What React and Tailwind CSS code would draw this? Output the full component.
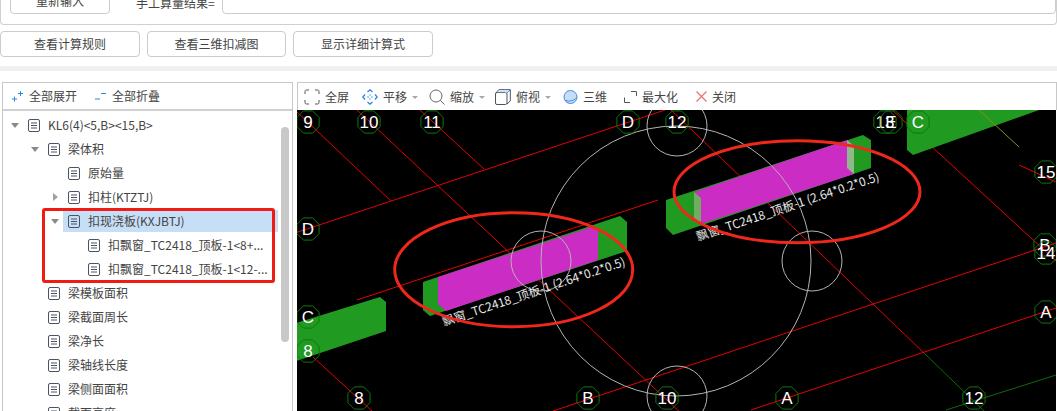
import React from 'react';

const DocIcon = () => (
  <svg width="12" height="13" viewBox="0 0 12 13" fill="none" stroke="#4b5363" strokeWidth="1" className="shrink-0">
    <rect x="0.5" y="0.5" width="11" height="12" rx="1.5" />
    <path d="M3 4h6M3 6.5h6M3 9h6" />
  </svg>
);

const treeRows = [
  { level: 0, arrow: 'down', text: 'KL6(4)<5,B><15,B>' },
  { level: 1, arrow: 'down', text: '梁体积' },
  { level: 2, text: '原始量' },
  { level: 2, arrow: 'right', text: '扣柱(KTZTJ)' },
  { level: 2, arrow: 'down', text: '扣现浇板(KXJBTJ)', active: true },
  { level: 3, text: '扣飘窗_TC2418_顶板-1<8+...' },
  { level: 3, text: '扣飘窗_TC2418_顶板-1<12-...' },
  { level: 1, text: '梁模板面积' },
  { level: 1, text: '梁截面周长' },
  { level: 1, text: '梁净长' },
  { level: 1, text: '梁轴线长度' },
  { level: 1, text: '梁侧面面积' },
  { level: 1, text: '截面高度' },
];

const indent = ['pl-[4px]', 'pl-[24px]', 'pl-[44px]', 'pl-[64px]'];

const TreeRow = ({ level, arrow, text, active }) => (
  <div className={`flex items-center h-6 shrink-0 ${indent[level]}`}>
    <div className="w-4 flex justify-center shrink-0">
      {arrow === 'down' && <div className="w-0 h-0 border-x-[4px] border-x-transparent border-t-[5px] border-t-[#8a8a8a]" />}
      {arrow === 'right' && <div className="w-0 h-0 border-y-[4px] border-y-transparent border-l-[5px] border-l-[#a0a0a0]" />}
    </div>
    <div className={`flex items-center gap-2 pl-[5px] h-[22px] whitespace-nowrap ${active ? 'bg-[#c7def7] w-[215px]' : ''}`}>
      <DocIcon />
      <span>{text}</span>
    </div>
  </div>
);

const Caret = () => <div className="ml-[5px] mt-[2px] w-0 h-0 border-x-[3px] border-x-transparent border-t-[3px] border-t-[#a8a8a8]" />;

const FullIcon = () => (
  <svg width="16" height="16" viewBox="0 0 16 16" fill="none" stroke="#555" strokeWidth="1">
    <path d="M1 5V2.5A1.5 1.5 0 0 1 2.5 1H5M11 1h2.500A1.500 1.500 0 0 1 15 2.500V5M15 11v2.500a1.500 1.500 0 0 1-1.500 1.500H11M5 15H2.500A1.500 1.500 0 0 1 1 13.500V11" />
  </svg>
);
const PanIcon = () => (
  <svg width="16" height="16" viewBox="0 0 16 16" fill="none" stroke="#2f86e6" strokeWidth="1.300">
    <path d="M5.500 3 8 .8 10.500 3M5.500 13 8 15.200 10.500 13M3 5.500.8 8 3 10.500M13 5.500 15.200 8 13 10.500" />
    <path d="M8 5.500v1M8 9.500v1M5.500 8h1M9.500 8h1" />
  </svg>
);
const SearchIcon = () => (
  <svg width="16" height="16" viewBox="0 0 16 16" fill="none" stroke="#666" strokeWidth="1">
    <circle cx="7" cy="7" r="6" />
    <path d="M11.300 11.300 15.500 15.500" />
  </svg>
);
const CubeIcon = () => (
  <svg width="16" height="16" viewBox="0 0 16 16" fill="none" stroke="#4b5363" strokeWidth="1">
    <rect x="0.500" y="3.500" width="11.500" height="12" rx="1.500" />
    <path d="M1 3.800 3.800.7H15.300V12L12 15" />
    <path d="M12 3.800 15.300.7" stroke="#2f86e6" />
    <path d="M2 3.300 4.200 1.300H14L12 3.300z" fill="#cfe2f8" stroke="none" />
  </svg>
);
const SphereIcon = () => (
  <svg width="15" height="14" viewBox="0 0 15 14">
    <circle cx="7.500" cy="7" r="6.500" fill="#c9dcf6" stroke="#3d8de8" strokeWidth="1" />
    <path d="M1.500 9.500C4 12 10 11.500 13.500 8" fill="none" stroke="#3d8de8" strokeWidth="1" />
  </svg>
);
const MaxIcon = () => (
  <svg width="13" height="12" viewBox="0 0 13 12" fill="none" stroke="#555" strokeWidth="1">
    <path d="M7 .5h5.500V5M.5 6.500v5H6" />
  </svg>
);
const CloseIcon = () => (
  <svg width="11" height="11" viewBox="0 0 11 11" fill="none" stroke="#f07070" strokeWidth="1.200">
    <path d="M.5.500l10 10M10.500.500l-10 10" />
  </svg>
);

const tools = [
  { icon: <FullIcon />, text: '全屏', cls: 'ml-[6px]' },
  { icon: <PanIcon />, text: '平移', caret: true, cls: 'ml-[13px]' },
  { icon: <SearchIcon />, text: '缩放', caret: true, cls: 'ml-[11px]' },
  { icon: <CubeIcon />, text: '俯视', caret: true, cls: 'ml-[10px]' },
  { icon: <SphereIcon />, text: '三维', cls: 'ml-[12px]' },
  { icon: <MaxIcon />, text: '最大化', cls: 'ml-[17px]' },
  { icon: <CloseIcon />, text: '关闭', cls: 'ml-[18px]' },
];

const labels = [
  ['9', 309, 122], ['10', 370, 122], ['11', 433, 122], ['D', 629, 122], ['12', 678, 122],
  ['13', 886, 122], ['E', 892, 122], ['C', 919, 122], ['15', 1047, 172], ['B', 1046, 245],
  ['14', 1047, 253], ['A', 1047, 312], ['D', 309, 229], ['C', 309, 317], ['8', 309, 351],
  ['8', 360, 398], ['B', 589, 398], ['10', 668, 398], ['A', 788, 398], ['12', 975, 398],
];

const redLines = [
  [297, 111, 392, 201], [358, 110, 684, 415], [421, 110, 485, 169], [296, 233, 666, 110],
  [358, 300, 659, 200], [672, 110, 925, 353], [893, 110, 1057, 261], [554, 411, 1057, 243],
  [752, 410, 1057, 308], [314, 357, 373, 411], [1020, 165, 1057, 182],
];

const octagon = (cx, cy, r = 12) =>
  Array.from({ length: 8 }, (_, i) => {
    const a = Math.PI / 8 + (i * Math.PI) / 4;
    return `${(cx + r * Math.cos(a)).toFixed(1)},${(cy + r * Math.sin(a)).toFixed(1)}`;
  }).join(' ');

const Drawing = () => (
  <svg viewBox="298 110 759 301" width="759" height="301" className="block bg-black">
    {redLines.map((l, i) => (
      <line key={i} x1={l[0]} y1={l[1]} x2={l[2]} y2={l[3]} stroke="#e60000" strokeWidth="1" />
    ))}
    <line x1="925" y1="353" x2="985" y2="411" stroke="#0d6b0d" strokeWidth="1" />
    <line x1="947" y1="410" x2="1057" y2="375" stroke="#0d6b0d" strokeWidth="1" />

    <polygon points="297,323 381,297 387,302 387,331 297,361" fill="#209a20" />
    <polygon points="424,282 439,277 621,216 628,222 628,251 431,316 424,310" fill="#209a20" />
    <polygon points="439,277 593,227 599,230 599,260 447,311 439,304" fill="#cb2cc4" />
    <polygon points="667,200 864,135 872,140 872,168 674,235 667,228" fill="#209a20" />
    <polygon points="695,192 848,140 855,146 855,174 702,224 702,198" fill="#cb2cc4" />
    <polygon points="695,192 702,198 702,224 695,218" fill="#6fae62" />
    <polygon points="848,140 855,146 855,174 848,168" fill="#8fb98b" />
    <polygon points="908,110 1040,110 914,155 908,150" fill="#209a20" />
    <line x1="980" y1="110" x2="1020" y2="147" stroke="#8c8c22" strokeWidth="1" />

    <g fill="none" stroke="#b4b4b4" strokeWidth="1">
      <circle cx="677" cy="261" r="135" />
      <circle cx="542" cy="261" r="30" />
      <circle cx="678" cy="126" r="30" />
      <circle cx="678" cy="396" r="30" />
      <circle cx="813" cy="261" r="30" />
    </g>

    {labels.map(([t, x, y], i) => (
      <g key={i}>
        <polygon points={octagon(x, y)} fill="none" stroke="#0c7a0c" strokeWidth="1" />
        <text x={x} y={y + 6} textAnchor="middle" fill="#fff" fontSize="17" fontFamily="'Liberation Sans', sans-serif">{t}</text>
      </g>
    ))}

    <g fill="#e6e6e6" fontSize="12" fontFamily="'Noto Sans CJK SC', sans-serif">
      <text transform="translate(445 326) rotate(-18.400)">飘窗_TC2418_顶板-1 (2.64*0.2*0.5)</text>
      <text transform="translate(699 241) rotate(-18.400)">飘窗_TC2418_顶板-1 (2.64*0.2*0.5)</text>
    </g>

    <ellipse cx="514.700" cy="269.700" rx="119" ry="57" fill="none" stroke="#f0281c" strokeWidth="3" />
    <ellipse cx="798" cy="191.700" rx="123" ry="51" fill="none" stroke="#f0281c" strokeWidth="3" />
  </svg>
);

export default function App() {
  return (
    <div className="relative w-[1057px] h-[411px] overflow-hidden bg-white text-[12px] leading-none text-[#444] font-['Noto_Sans_CJK_SC','Liberation_Sans',sans-serif]">
      {/* Top card, cut off by the window */}
      <div className="h-[25px] border border-t-0 border-[#d0d0d0] rounded-b-[4px] flex items-start overflow-hidden">
        <div className="ml-[9px] -mt-[12px] w-[100px] h-[26px] border border-[#ccc] rounded-[4px] flex items-center justify-center">重新输入</div>
        <div className="ml-[26px] -mt-[3px] w-[86px] whitespace-nowrap text-[#444]">手工算量结果=</div>
        <div className="-mt-[12px] flex-1 h-[26px] border border-[#ccc] rounded-[4px]" />
      </div>

      {/* Action buttons */}
      <div className="flex gap-[7px] mt-[6px]">
        <div className="w-[140px] h-[26px] border border-[#ccc] rounded-[4px] flex items-center justify-center">查看计算规则</div>
        <div className="w-[139px] h-[26px] border border-[#ccc] rounded-[4px] flex items-center justify-center">查看三维扣减图</div>
        <div className="w-[140px] h-[26px] border border-[#ccc] rounded-[4px] flex items-center justify-center">显示详细计算式</div>
      </div>

      <div className="h-[5px] bg-[#f0f0f0] mt-[9px]" />

      {/* Main area */}
      <div className="flex mt-[11px] h-[329px] pl-[2px]">
        <div className="relative w-[291px] border-x border-t border-[#c8c8c8] flex flex-col overflow-hidden">
          <div className="h-[28px] shrink-0 border-b-2 border-[#d0d0d0] flex items-center">
            <svg width="11" height="11" viewBox="0 0 11 11" fill="none" stroke="#2f86e6" className="ml-[9px]">
              <path d="M0 8h5M2.500 5.500v5M6 2.500h5M8.500 0v5" />
            </svg>
            <span className="ml-[6px]">全部展开</span>
            <svg width="11" height="11" viewBox="0 0 11 11" fill="none" stroke="#2f86e6" className="ml-[18px]">
              <path d="M0 8h5M6 2.500h5" />
            </svg>
            <span className="ml-[6px]">全部折叠</span>
          </div>
          <div className="flex flex-col pt-[2px]">
            {treeRows.map((row, i) => <TreeRow key={i} {...row} />)}
          </div>
          <div className="absolute left-[278px] top-[44px] w-[8px] h-[215px] rounded-full bg-[#c8c8c8]" />
        </div>

        <div className="ml-[4px] flex-1 flex flex-col">
          <div className="h-[28px] shrink-0 border border-b-0 border-[#c8c8c8] flex items-center">
            {tools.map((t, i) => (
              <div key={i} className={`flex items-center ${t.cls}`}>
                <div className="mr-[5px] flex items-center">{t.icon}</div>
                <span>{t.text}</span>
                {t.caret && <Caret />}
              </div>
            ))}
          </div>
          <Drawing />
        </div>
      </div>

      {/* Annotation box over the tree */}
      <div className="absolute left-[42px] top-[208px] w-[233px] h-[75px] border-[3px] border-[#f01c14] rounded-[3px]" />
    </div>
  );
}
